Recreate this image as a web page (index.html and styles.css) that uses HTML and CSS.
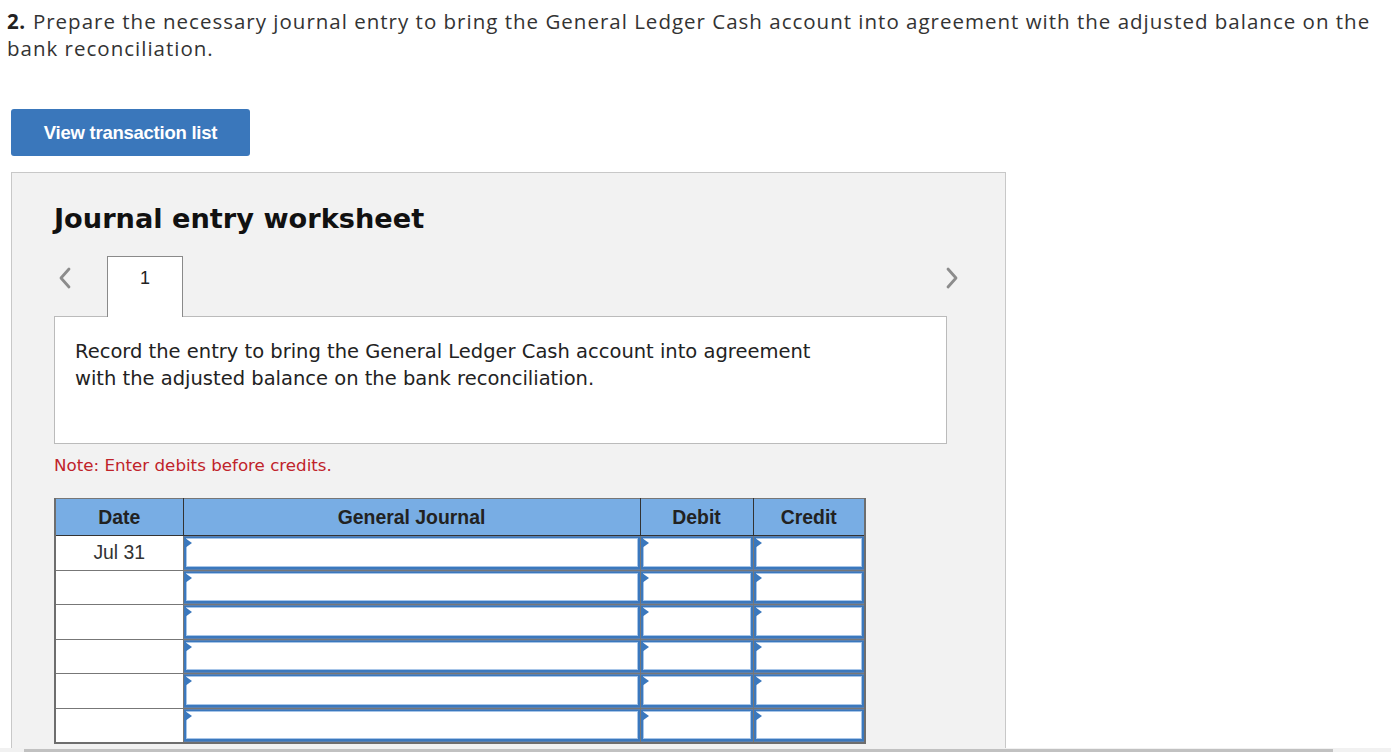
FILE: index.html
```html
<!DOCTYPE html>
<html>
<head>
<meta charset="utf-8">
<link rel="stylesheet" href="styles.css">
</head>
<body>
<div class="page">
  <p class="question"><b>2.</b> Prepare the necessary journal entry to bring the General Ledger Cash account into agreement with the adjusted balance on the bank reconciliation.</p>
  <button class="view-btn">View transaction list</button>
  <div class="panel">
    <h2 class="ws-title">Journal entry worksheet</h2>
    <div class="tabs-row">
      <span class="nav-arrow">
        <svg width="14" height="24" viewBox="0 0 14 24"><path d="M11 3 L3 12 L11 21" fill="none" stroke="#8c8c8c" stroke-width="2.8" stroke-linecap="round" stroke-linejoin="round"/></svg>
      </span>
      <div class="tab">1</div>
      <span class="spacer"></span>
      <span class="nav-arrow right">
        <svg width="14" height="24" viewBox="0 0 14 24"><path d="M3 3 L11 12 L3 21" fill="none" stroke="#8c8c8c" stroke-width="2.8" stroke-linecap="round" stroke-linejoin="round"/></svg>
      </span>
    </div>
    <div class="desc">Record the entry to bring the General Ledger Cash account into agreement<br>with the adjusted balance on the bank reconciliation.</div>
    <p class="note">Note: Enter debits before credits.</p>
    <table class="journal">
      <thead>
        <tr><th class="c-date">Date</th><th class="c-acct">General Journal</th><th class="c-amt">Debit</th><th class="c-amt2">Credit</th></tr>
      </thead>
      <tbody>
        <tr><td class="date">Jul 31</td><td class="inp"><div class="box"></div></td><td class="inp"><div class="box"></div></td><td class="inp"><div class="box"></div></td></tr>
        <tr><td class="date"></td><td class="inp"><div class="box"></div></td><td class="inp"><div class="box"></div></td><td class="inp"><div class="box"></div></td></tr>
        <tr><td class="date"></td><td class="inp"><div class="box"></div></td><td class="inp"><div class="box"></div></td><td class="inp"><div class="box"></div></td></tr>
        <tr><td class="date"></td><td class="inp"><div class="box"></div></td><td class="inp"><div class="box"></div></td><td class="inp"><div class="box"></div></td></tr>
        <tr><td class="date"></td><td class="inp"><div class="box"></div></td><td class="inp"><div class="box"></div></td><td class="inp"><div class="box"></div></td></tr>
        <tr><td class="date"></td><td class="inp"><div class="box"></div></td><td class="inp"><div class="box"></div></td><td class="inp"><div class="box"></div></td></tr>
      </tbody>
    </table>
  </div>
</div>
<div class="hscroll"><div class="thumb"></div></div>
</body>
</html>
```

FILE: styles.css
```css
html, body {
  margin: 0;
  padding: 0;
  background: #fff;
  overflow: hidden;
  height: 752px;
}
.page {
  padding: 0 0 0 7px;
  height: 748px;
  overflow: hidden;
}
.question {
  margin: 0;
  padding-top: 8px;
  font-family: "Open Sans", "Lato", sans-serif;
  font-size: 20.5px;
  line-height: 27px;
  color: #333;
  letter-spacing: 1px;
  width: 1375px;
}
.question b {
  font-weight: 700;
  color: #222;
  letter-spacing: 0.5px;
  margin-right: 1px;
}
.view-btn {
  display: block;
  margin: 47px 0 0 4px;
  width: 239px;
  height: 47px;
  border: none;
  border-radius: 3px;
  background: #3a77bb;
  color: #fff;
  font-family: "Liberation Sans", Arial, sans-serif;
  font-weight: 700;
  font-size: 18.5px;
  letter-spacing: -0.25px;
  padding: 0;
}
.panel {
  margin: 16px 0 0 4px;
  width: 995px;
  height: 600px;
  background: #f2f2f2;
  border: 1px solid #c8c8c8;
  box-sizing: border-box;
  padding: 0 58px 0 42px;
}
.ws-title {
  margin: 29px 0 0 0;
  font-family: "DejaVu Sans", Verdana, sans-serif;
  font-weight: 700;
  font-size: 27.2px;
  line-height: 34px;
  color: #111;
}
.tabs-row {
  display: flex;
  align-items: flex-start;
  margin-top: 20px;
  height: 60px;
}
.nav-arrow {
  display: flex;
  width: 14px;
  margin: 10px 0 0 4px;
}
.nav-arrow.right {
  margin: 10px -12px 0 0;
}
.spacer { flex: 1; }
.tab {
  margin-left: 35px;
  width: 76px;
  height: 61px;
  box-sizing: border-box;
  background: #fff;
  border: 1px solid #8a8a8a;
  border-bottom: none;
  text-align: center;
  font-family: "Liberation Sans", Arial, sans-serif;
  font-size: 18px;
  color: #222;
  padding-top: 11px;
  position: relative;
  z-index: 1;
}
.desc {
  background: #fff;
  border: 1px solid #bbb;
  height: 128px;
  box-sizing: border-box;
  padding: 21px 20px 0 20px;
  font-family: "DejaVu Sans", Verdana, sans-serif;
  font-size: 19.5px;
  line-height: 27px;
  color: #222;
  white-space: nowrap;
}
.note {
  margin: 12px 0 0 0;
  font-family: "DejaVu Sans", Verdana, sans-serif;
  font-size: 16.7px;
  line-height: 19px;
  color: #c0232a;
}
.journal {
  margin-top: 23px;
  border-collapse: collapse;
  font-family: "Liberation Sans", Arial, sans-serif;
  border: 2px solid #6e6e6e;
  border-top: 1px solid #777;
}
.journal th {
  background: #78ade4;
  border: 1px solid #333;
  border-top-color: #777;
  height: 37px;
  padding: 0;
  font-size: 19.4px;
  font-weight: 700;
  color: #222;
  box-sizing: border-box;
}
.journal th:first-child { border-left-color: #777; }
.c-date { width: 128px; }
.c-acct { width: 457px; }
.c-amt { width: 113px; }
.c-amt2 { width: 112px; }
.journal td {
  height: 34.5px;
  box-sizing: border-box;
  padding: 0;
  border: 1px solid #777;
  background: #fff;
}
.journal td.date {
  text-align: center;
  vertical-align: top;
  font-size: 19.4px;
  color: #333;
  padding-top: 5px;
}
.journal td.inp {
  padding: 1px 0 1px 0;
  vertical-align: top;
  background: #5a80b0;
}
.box {
  position: relative;
  height: 31.5px;
  box-sizing: border-box;
  background: #fff;
  border: 2px solid #3b78bd;
  border-top-width: 1px;
  box-shadow: inset 0 0 0 1px #a7c5e8;
}
.box::before {
  content: "";
  position: absolute;
  left: -1px;
  top: 0;
  width: 0;
  height: 0;
  border-top: 5px solid transparent;
  border-bottom: 5px solid transparent;
  border-left: 7px solid #3b78bd;
}
.hscroll {
  position: absolute;
  left: 0;
  top: 748px;
  width: 1391px;
  height: 4px;
  background: #f1f1f1;
}
.hscroll .thumb {
  margin-left: 24px;
  width: 1309px;
  height: 3px;
  margin-top: 1px;
  background: #c1c1c1;
}
```
